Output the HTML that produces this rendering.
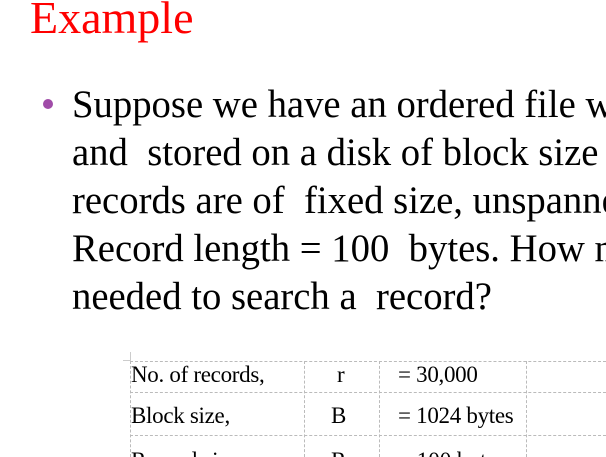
<!DOCTYPE html>
<html><head><style>
html,body{margin:0;padding:0;overflow:hidden}
#w{width:606px;height:457px;overflow:hidden;background:#fff;position:relative;font-family:"Liberation Serif","DejaVu Serif",serif}
.t{position:absolute;white-space:nowrap}
.l{position:absolute;border-color:#bbb}
</style></head><body><div id="w">
<div class="t" style="left:30px;top:-9px;font-size:46px;color:#f00">Example</div>
<div class="t" style="left:43px;top:99px;width:10px;height:10px;border-radius:50%;background:#a04ca8"></div>
<div class="t" style="left:72px;top:81px;font-size:38.7px;line-height:48px;color:#000">Suppose we have an ordered file with<br>and&nbsp; stored on a disk of block size<br>records are of&nbsp; fixed size, unspanned<br>Record length = 100&nbsp; bytes. How many<br>needed to search a&nbsp; record?</div>
<div class="l" style="left:130px;top:361px;width:476px;border-top:1px dashed #bbb"></div>
<div class="l" style="left:130px;top:392px;width:476px;border-top:1px dashed #bbb"></div>
<div class="l" style="left:130px;top:435px;width:476px;border-top:1px dashed #bbb"></div>
<div class="l" style="left:130px;top:361px;height:96px;border-left:1px dashed #bbb"></div>
<div class="l" style="left:304px;top:361px;height:96px;border-left:1px dashed #bbb"></div>
<div class="l" style="left:379px;top:361px;height:96px;border-left:1px dashed #bbb"></div>
<div class="l" style="left:526px;top:361px;height:96px;border-left:1px dashed #bbb"></div>
<div class="l" style="left:130px;top:352px;height:9px;border-left:1px solid #ccc"></div>
<div class="l" style="left:123px;top:360px;width:7px;border-top:1px solid #ccc"></div>
<div class="t" style="left:131px;top:362px;font-size:23px;letter-spacing:-0.3px">No. of records,</div>
<div class="t" style="left:337px;top:362px;font-size:23px">r</div>
<div class="t" style="left:398px;top:362px;font-size:23px;letter-spacing:-0.3px">= 30,000</div>
<div class="t" style="left:131px;top:403px;font-size:23px;letter-spacing:-0.3px">Block size,</div>
<div class="t" style="left:331px;top:403px;font-size:23px">B</div>
<div class="t" style="left:398px;top:403px;font-size:23px;letter-spacing:-0.3px">= 1024 bytes</div>
<div class="t" style="left:131px;top:448px;font-size:23px">Record size,</div>
<div class="t" style="left:331px;top:448px;font-size:23px">R</div>
<div class="t" style="left:398px;top:448px;font-size:23px">= 100 bytes</div>
</div></body></html>
